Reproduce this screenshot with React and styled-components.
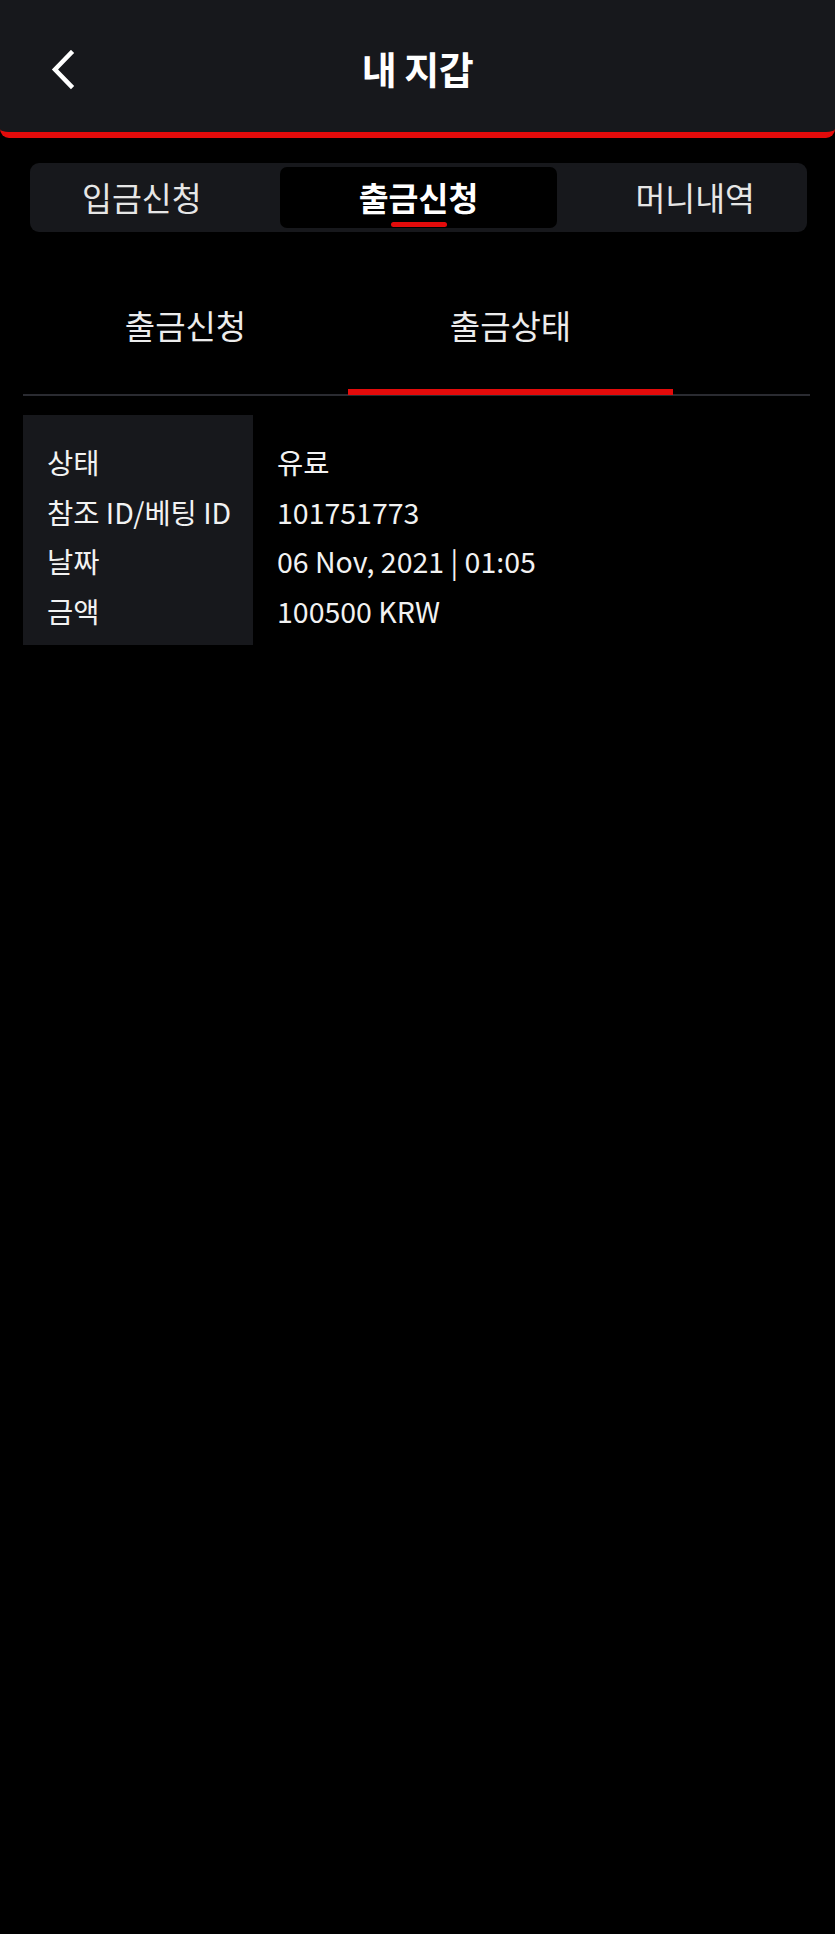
import React, { useState } from "react";
import styled, { createGlobalStyle } from "styled-components";

const GlobalStyle = createGlobalStyle`
  html, body {
    margin: 0;
    padding: 0;
    background: #000;
  }
  body {
    font-family: "Noto Sans CJK KR", "Noto Sans", sans-serif;
    color: #f2f2f2;
  }
`;

const TABS = ["입금신청", "출금신청", "머니내역"];
const SUB_TABS = ["출금신청", "출금상태"];

const ROWS = [
  { label: "상태", value: "유료" },
  { label: "참조 ID/베팅 ID", value: "101751773" },
  { label: "날짜", value: "06 Nov, 2021 | 01:05" },
  { label: "금액", value: "100500 KRW" },
];

function App() {
  const [tab, setTab] = useState(1);
  const [subTab, setSubTab] = useState(1);

  return (
    <Page>
      <GlobalStyle />
      <Header>
        <BackButton aria-label="back">
          <svg width="26" height="40" viewBox="0 0 26 40" fill="none">
            <path
              d="M21 3 L5 19.5 L21 36"
              stroke="#fff"
              strokeWidth="4.5"
              strokeLinecap="square"
            />
          </svg>
        </BackButton>
        <Title>내 지갑</Title>
      </Header>

      <TabBar>
        {TABS.map((t, i) => (
          <Tab key={t} active={i === tab} onClick={() => setTab(i)}>
            {t}
          </Tab>
        ))}
      </TabBar>

      <SubTabs>
        {SUB_TABS.map((t, i) => (
          <SubTab key={t} active={i === subTab} onClick={() => setSubTab(i)}>
            {t}
          </SubTab>
        ))}
      </SubTabs>

      <InfoTable>
        {ROWS.map((r) => (
          <React.Fragment key={r.label}>
            <Label>{r.label}</Label>
            <Value>{r.value}</Value>
          </React.Fragment>
        ))}
      </InfoTable>
    </Page>
  );
}

export default App;

const Page = styled.div`
  width: 835px;
  min-height: 1934px;
  background: #000;
`;

const Header = styled.header`
  position: relative;
  height: 132px;
  background: #17181c;
  border-bottom: 6px solid #e30b0b;
  border-radius: 0 0 9px 9px;
  display: flex;
  align-items: center;
  justify-content: center;
`;

const BackButton = styled.button`
  position: absolute;
  left: 50px;
  top: 50px;
  background: none;
  border: 0;
  padding: 0;
  display: flex;
  cursor: pointer;
`;

const Title = styled.h1`
  margin: 2px 0 0;
  font-size: 38px;
  font-weight: 700;
  color: #fff;
  letter-spacing: -0.5px;
`;

const TabBar = styled.nav`
  margin: 25px 28px 0 30px;
  height: 69px;
  box-sizing: border-box;
  padding: 4px 5px;
  background: #17181c;
  border-radius: 9px;
  display: flex;
  justify-content: space-between;
  align-items: stretch;
`;

const Tab = styled.div`
  position: relative;
  width: ${(p) => (p.active ? "277px" : "auto")};
  padding: ${(p) => (p.active ? "0" : "0 47px")};
  display: flex;
  align-items: center;
  justify-content: center;
  font-size: 32.5px;
  font-weight: ${(p) => (p.active ? 700 : 400)};
  color: ${(p) => (p.active ? "#fff" : "#e6e6e6")};
  background: ${(p) => (p.active ? "#000" : "transparent")};
  border-radius: 7px;
  padding-bottom: 3px;
  cursor: pointer;

  &::after {
    content: "";
    display: ${(p) => (p.active ? "block" : "none")};
    position: absolute;
    left: 50%;
    bottom: 1px;
    width: 56px;
    height: 5px;
    margin-left: -28px;
    border-radius: 3px;
    background: #e30b0b;
  }
`;

const SubTabs = styled.div`
  margin: 38px 25px 0 23px;
  height: 124px;
  display: flex;
  border-bottom: 2px solid #2a2b31;
`;

const SubTab = styled.div`
  width: 325px;
  display: flex;
  align-items: center;
  justify-content: center;
  font-size: 33px;
  color: #ececec;
  padding-bottom: 10px;
  box-sizing: border-box;
  border-bottom: 6px solid ${(p) => (p.active ? "#e30b0b" : "transparent")};
  margin-bottom: -1px;
  cursor: pointer;
`;

const InfoTable = styled.div`
  margin: 19px 0 0 23px;
  display: grid;
  grid-template-columns: 230px 1fr;
  font-size: 28.5px;
  line-height: 49.5px;
`;

const Label = styled.div`
  background: #17181c;
  padding-left: 24px;
  color: #f2f2f2;
  white-space: nowrap;

  &:first-child {
    padding-top: 22px;
  }
  &:nth-last-child(2) {
    padding-bottom: 10px;
  }
`;

const Value = styled.div`
  padding-left: 24px;
  color: #f2f2f2;

  &:nth-child(2) {
    padding-top: 22px;
  }
  &:last-child {
    padding-bottom: 10px;
  }
`;
